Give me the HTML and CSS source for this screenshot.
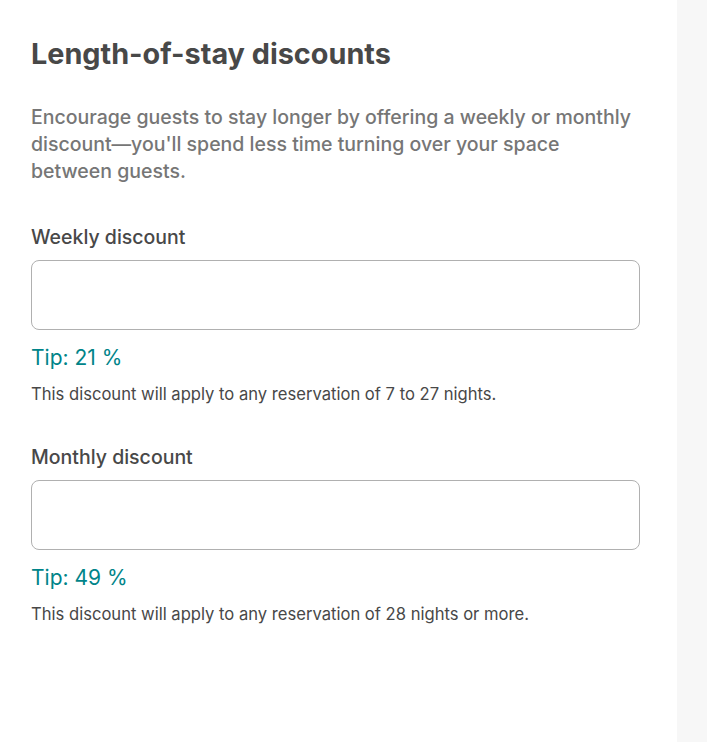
FILE: index.html
```html
<!DOCTYPE html>
<html>
<head>
<meta charset="utf-8">
<link rel="stylesheet" href="styles.css">
</head>
<body>
<div class="layout">
  <main class="main">
    <h1 class="title">Length-of-stay discounts</h1>
    <p class="intro">Encourage guests to stay longer by offering a weekly or monthly discount—you'll spend less time turning over your space between guests.</p>
    <section class="field">
      <label class="label">Weekly discount</label>
      <div class="input"></div>
      <div class="tip">Tip: 21 %</div>
      <div class="note">This discount will apply to any reservation of 7 to 27 nights.</div>
    </section>
    <section class="field">
      <label class="label">Monthly discount</label>
      <div class="input"></div>
      <div class="tip">Tip: 49 %</div>
      <div class="note">This discount will apply to any reservation of 28 nights or more.</div>
    </section>
  </main>
  <aside class="side"></aside>
</div>
</body>
</html>
```
FILE: styles.css
```css
html, body { margin: 0; padding: 0; }
body { font-family: Inter, "Open Sans", "Liberation Sans", sans-serif; color: #484848; background: #fff; }
.layout { display: flex; height: 742px; }
.main { width: 677px; padding: 34px 37px 0 31px; box-sizing: border-box; }
.side { flex: 1; background: #f7f7f7; }
.title { margin: 0; font-size: 28.8px; font-weight: 700; line-height: 40px; color: #484848; }
.intro { margin: 30px 0 0; max-width: 606px; font-size: 19.5px; line-height: 27px; font-weight: 500; color: #767676; }
.field { margin-top: 40px; }
.label { display: block; font-size: 19.5px; font-weight: 500; line-height: 24px; color: #484848; }
.input { margin-top: 11px; height: 68px; border: 1px solid #b0b0b0; border-radius: 8px; }
.tip { margin-top: 14px; font-size: 21px; line-height: 28px; color: #008489; font-weight: 400; }
.note { margin-top: 11px; font-size: 16.6px; line-height: 22px; color: #484848; }
```
